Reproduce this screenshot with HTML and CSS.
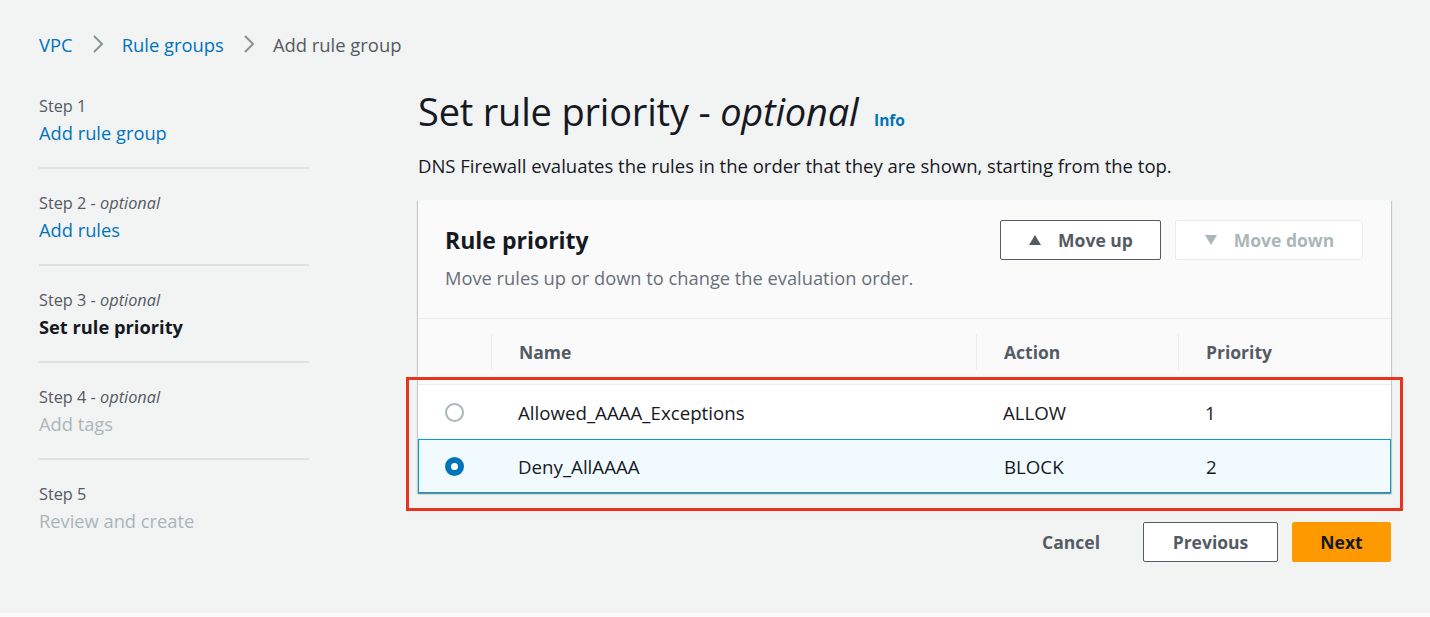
FILE: index.html
```html
<!DOCTYPE html>
<html lang="en">
<head>
<meta charset="utf-8">
<title>Add rule group</title>
<link rel="stylesheet" href="styles.css">
</head>
<body>
<div class="page">
  <nav class="breadcrumbs">
    <a class="crumb link" href="#">VPC</a>
    <span class="chev"><svg width="14" height="20" viewBox="0 0 14 20"><path d="M3 2 L11 10 L3 18" fill="none" stroke="#879596" stroke-width="2"/></svg></span>
    <a class="crumb link" href="#">Rule groups</a>
    <span class="chev"><svg width="14" height="20" viewBox="0 0 14 20"><path d="M3 2 L11 10 L3 18" fill="none" stroke="#879596" stroke-width="2"/></svg></span>
    <span class="crumb current">Add rule group</span>
  </nav>

  <div class="layout">
    <ul class="steps">
      <li class="step">
        <div class="step-label">Step 1</div>
        <a class="step-link link" href="#">Add rule group</a>
      </li>
      <li class="step">
        <div class="step-label">Step 2 - <i>optional</i></div>
        <a class="step-link link" href="#">Add rules</a>
      </li>
      <li class="step">
        <div class="step-label">Step 3 - <i>optional</i></div>
        <span class="step-link active">Set rule priority</span>
      </li>
      <li class="step">
        <div class="step-label">Step 4 - <i>optional</i></div>
        <span class="step-link disabled">Add tags</span>
      </li>
      <li class="step last">
        <div class="step-label">Step 5</div>
        <span class="step-link disabled">Review and create</span>
      </li>
    </ul>

    <main class="main">
      <h1 class="title">Set rule priority - <i>optional</i> <a class="info" href="#">Info</a></h1>
      <p class="desc">DNS Firewall evaluates the rules in the order that they are shown, starting from the top.</p>

      <section class="container">
        <div class="container-header">
          <div class="header-text">
            <h2 class="container-title">Rule priority</h2>
            <p class="container-sub">Move rules up or down to change the evaluation order.</p>
          </div>
          <div class="header-actions">
            <button class="btn btn-normal"><svg class="tri" width="14" height="12" viewBox="0 0 14 12"><path d="M7 1 L13 11 L1 11 Z" fill="#545b64"/></svg>Move up</button>
            <button class="btn btn-disabled"><svg class="tri" width="14" height="12" viewBox="0 0 14 12"><path d="M1 1 L13 1 L7 11 Z" fill="#aab7b8"/></svg>Move down</button>
          </div>
        </div>
        <div class="table">
          <div class="thead">
            <div class="th th-sel"></div>
            <div class="th th-name"><span>Name</span></div>
            <div class="th th-action"><span>Action</span></div>
            <div class="th th-prio"><span>Priority</span></div>
          </div>
          <div class="tbody">
            <div class="tr">
              <div class="td td-sel"><span class="radio"></span></div>
              <div class="td td-name">Allowed_AAAA_Exceptions</div>
              <div class="td td-action">ALLOW</div>
              <div class="td td-prio">1</div>
            </div>
            <div class="tr selected">
              <div class="td td-sel"><span class="radio checked"></span></div>
              <div class="td td-name">Deny_AllAAAA</div>
              <div class="td td-action">BLOCK</div>
              <div class="td td-prio">2</div>
            </div>
            <div class="highlight"></div>
          </div>
        </div>
      </section>

      <div class="footer">
        <button class="btn btn-link">Cancel</button>
        <button class="btn btn-normal btn-prev">Previous</button>
        <button class="btn btn-primary">Next</button>
      </div>
    </main>
  </div>
</div>
<div class="bottom-strip"></div>
</body>
</html>
```

FILE: styles.css
```css
* { box-sizing: border-box; }
html, body { margin: 0; padding: 0; }
body {
  background: #f2f3f3;
  font-family: "Open Sans", Lato, "Liberation Sans", sans-serif;
  color: #16191f;
  height: 617px;
  overflow: hidden;
  position: relative;
}
a { text-decoration: none; }
.link { color: #0073bb; }

.page { padding: 31px 39px 0 39px; }

.breadcrumbs {
  display: flex;
  align-items: center;
  font-size: 18.4px;
  height: 26px;
}
.chev { display: inline-flex; margin: 0 17px 0 18px; }
.crumb.current { color: #545b64; }

.layout {
  display: grid;
  grid-template-columns: 270px 973px;
  column-gap: 109px;
  margin-top: 33px;
}

.steps { list-style: none; margin: 0; padding: 0; }
.step {
  padding: 5px 0 0 0;
  border-bottom: 2px solid #dde2e3;
  margin-bottom: 18px;
  height: 79px;
}
.step.last { border-bottom: none; }
.step-label { font-size: 16.3px; color: #545b64; line-height: 22px; }
.step-link { display: block; font-size: 18.3px; line-height: 28px; margin-top: 2px; }
.step-link.active { font-weight: 700; color: #16191f; }
.step-link.disabled { color: #aab7b8; }

.title {
  margin: -3px 0 0 0;
  font-size: 38px;
  font-weight: 400;
  line-height: 48px;
  letter-spacing: -0.2px;
}
.info { font-size: 15.5px; font-weight: 700; color: #0073bb; margin-left: 6px; letter-spacing: 0; }
.desc { margin: 9px 0 0 0; font-size: 18.5px; line-height: 26px; color: #16191f; }

.container {
  margin-top: 21px;
  background: #fff;
  box-shadow: 0 1px 1px 0 rgba(0,28,36,.3), 1px 1px 1px 0 rgba(0,28,36,.15), -1px 1px 1px 0 rgba(0,28,36,.15);
}
.container-header {
  background: #fafafa;
  border-bottom: 1px solid #eaeded;
  display: flex;
  justify-content: space-between;
  padding: 20px 28px 0 27px;
  height: 119px;
}
.container-title { margin: 5px 0 0 0; font-size: 23px; font-weight: 700; line-height: 30px; }
.container-sub { margin: 11px 0 0 0; font-size: 18.3px; line-height: 24px; color: #687078; }
.header-actions { display: flex; gap: 14px; }

.btn {
  font-family: inherit;
  font-size: 17.5px;
  font-weight: 700;
  height: 40px;
  border-radius: 2px;
  display: inline-flex;
  align-items: center;
  justify-content: center;
  cursor: pointer;
  background: #fff;
  padding: 0 20px;
}
.btn-normal { border: 1px solid #545b64; color: #545b64; }
.btn-disabled { border: 1px solid #eaeded; color: #aab7b8; }
.tri { margin-right: 16px; }
.header-actions .btn-normal { width: 161px; }
.header-actions .btn-disabled { width: 188px; }

.thead {
  display: grid;
  grid-template-columns: 73px 485px 202px 1fr;
  background: #fafafa;
  height: 65px;
  align-items: center;
  padding-top: 1px;
}
.th {
  font-size: 17.5px;
  font-weight: 700;
  color: #545b64;
  height: 36px;
  display: flex;
  align-items: center;
  padding-left: 27px;
  border-left: 1px solid #eaeded;
}
.th-sel { border-left: none; }

.tbody { position: relative; }
.tr {
  display: grid;
  grid-template-columns: 73px 485px 202px 1fr;
  height: 55px;
  align-items: center;
  border-top: 1px solid #eaeded;
  font-size: 18.7px;
}
.td { padding-left: 27px; }
.td-sel { padding-left: 27px; display: flex; align-items: center; }
.tr.selected {
  background: #f1faff;
  border: 1px solid #00a1c9;
  height: 54px;
}
.tr.selected .td-sel { padding-left: 26px; }
.tr.selected .td-name { padding-left: 26px; }

.radio {
  width: 19px;
  height: 19px;
  border-radius: 50%;
  border: 2px solid #aab7b8;
  background: #fff;
  display: inline-block;
}
.radio.checked { border: 6px solid #0073bb; }

.highlight {
  position: absolute;
  left: -12px;
  right: -12px;
  top: -7px;
  bottom: -18px;
  border: 3px solid #e8341f;
  pointer-events: none;
}

.footer {
  display: flex;
  justify-content: flex-end;
  gap: 14px;
  margin-top: 29px;
}
.btn-link { border: none; background: transparent; color: #545b64; padding: 0 29px 0 20px; }
.btn-prev { width: 135px; }
.btn-primary { background: #ff9900; border: 1px solid #ff9900; color: #16191f; width: 99px; }

.bottom-strip {
  position: absolute;
  left: 0; right: 0; bottom: 0;
  height: 4px;
  background: #fbfbfb;
}
```
